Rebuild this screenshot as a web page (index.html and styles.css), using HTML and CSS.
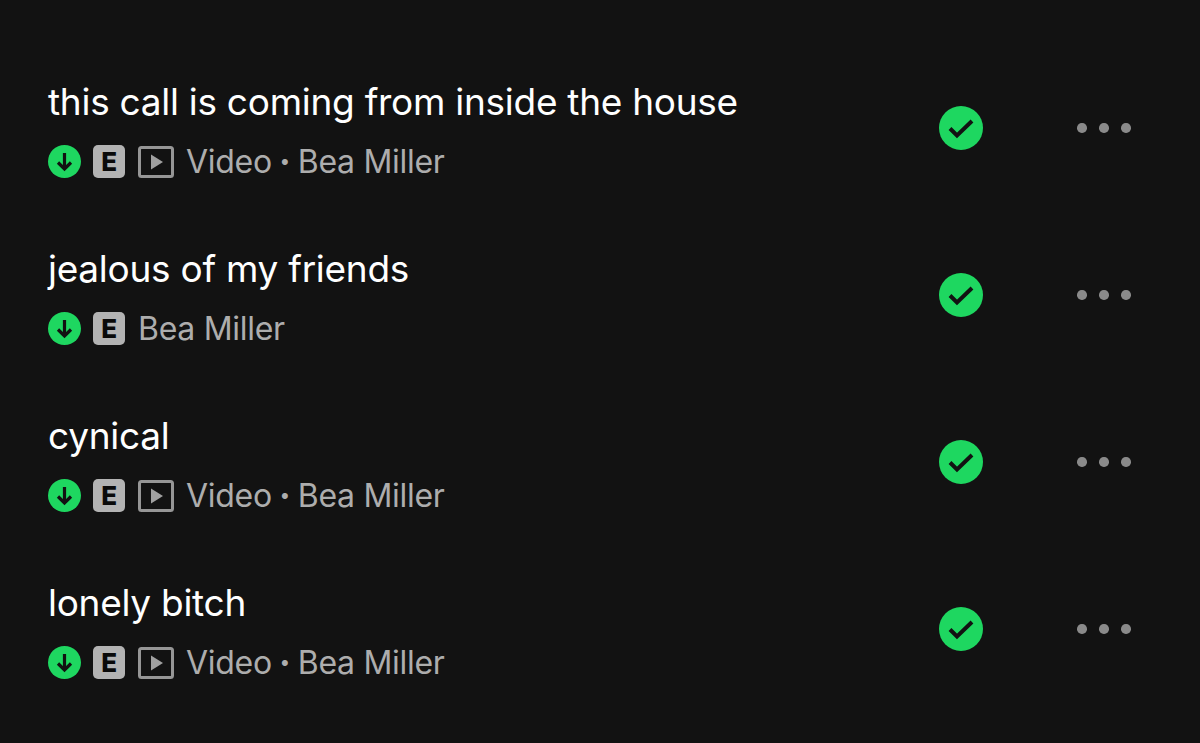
FILE: index.html
```html
<!DOCTYPE html>
<html>

<head>
    <title>Bea Miller tracks</title>
    <link rel="stylesheet" href="styles.css">
</head>

<body>
    <svg width="0" height="0" class="defs">
        <symbol id="dl" viewBox="0 0 33 33">
            <circle cx="16.5" cy="16.5" r="16.5" fill="#1ed760" />
            <path d="M16.5 8V24M10 17.5l6.5 6.5 6.5-6.5" fill="none" stroke="#121212" stroke-width="3.2" />
        </symbol>
        <symbol id="vid" viewBox="0 0 36 32">
            <rect x="1.5" y="1.5" width="33" height="29" rx="2" fill="none" stroke="#969696" stroke-width="3" />
            <path d="M13 8.5L25 16 13 23.5Z" fill="#a0a0a0" />
        </symbol>
        <symbol id="check" viewBox="0 0 44 44">
            <circle cx="22" cy="22" r="22" fill="#1ed760" />
            <path d="M11 22.5l7 7L33 15" fill="none" stroke="#121212" stroke-width="4" />
        </symbol>
    </svg>

    <div class="list">
        <div class="row">
            <div class="info">
                <div class="title">this call is coming from inside the house</div>
                <div class="sub">
                    <svg class="ic-dl"><use href="#dl" /></svg>
                    <span class="badge">E</span>
                    <svg class="ic-vid"><use href="#vid" /></svg>
                    <span>Video</span><span class="dot">•</span><span>Bea Miller</span>
                </div>
            </div>
            <svg class="ic-check"><use href="#check" /></svg>
            <div class="more"><i></i><i></i><i></i></div>
        </div>
        <div class="row">
            <div class="info">
                <div class="title">jealous of my friends</div>
                <div class="sub">
                    <svg class="ic-dl"><use href="#dl" /></svg>
                    <span class="badge">E</span>
                    <span>Bea Miller</span>
                </div>
            </div>
            <svg class="ic-check"><use href="#check" /></svg>
            <div class="more"><i></i><i></i><i></i></div>
        </div>
        <div class="row">
            <div class="info">
                <div class="title">cynical</div>
                <div class="sub">
                    <svg class="ic-dl"><use href="#dl" /></svg>
                    <span class="badge">E</span>
                    <svg class="ic-vid"><use href="#vid" /></svg>
                    <span>Video</span><span class="dot">•</span><span>Bea Miller</span>
                </div>
            </div>
            <svg class="ic-check"><use href="#check" /></svg>
            <div class="more"><i></i><i></i><i></i></div>
        </div>
        <div class="row">
            <div class="info">
                <div class="title">lonely bitch</div>
                <div class="sub">
                    <svg class="ic-dl"><use href="#dl" /></svg>
                    <span class="badge">E</span>
                    <svg class="ic-vid"><use href="#vid" /></svg>
                    <span>Video</span><span class="dot">•</span><span>Bea Miller</span>
                </div>
            </div>
            <svg class="ic-check"><use href="#check" /></svg>
            <div class="more"><i></i><i></i><i></i></div>
        </div>
    </div>
</body>

</html>
```
FILE: styles.css
```css
html,
body {
    height: 100%;
}

body {
    margin: 0px;
    background-color: #121212;
    font-family: 'Inter', sans-serif;
    overflow: hidden;
}

.defs {
    display: none;
}

.list {
    padding: 44px 68px 0px 48px;
}

.row {
    display: flex;
    align-items: center;
    height: 167px;
}

.info {
    flex: 1;
    display: flex;
    flex-direction: column;
    gap: 20px;
    padding-top: 4px;
}

.title {
    color: #ffffff;
    font-size: 37px;
    letter-spacing: -0.27px;
    line-height: 44px;
}

.sub {
    display: flex;
    align-items: center;
    height: 36px;
    color: #adadad;
    font-size: 32px;
    letter-spacing: -0.3px;
}

.ic-dl {
    width: 33px;
    height: 33px;
    margin-right: 12px;
}

.badge {
    width: 32px;
    height: 33px;
    border-radius: 5px;
    background-color: #b3b3b3;
    color: #0a0a0a;
    font-size: 26px;
    font-weight: 800;
    line-height: 33px;
    text-align: center;
    margin-right: 13px;
}

.ic-vid {
    width: 36px;
    height: 32px;
    margin-right: 12px;
}

.dot {
    width: 26px;
    font-size: 19px;
    text-align: center;
}

.ic-check {
    width: 44px;
    height: 44px;
    margin-right: 94px;
}

.more {
    display: flex;
    gap: 12.5px;
    width: 55px;
    padding-top: 1px;
}

.more i {
    width: 9.5px;
    height: 9.5px;
    border-radius: 50%;
    background-color: #8a8a8a;
}
```
